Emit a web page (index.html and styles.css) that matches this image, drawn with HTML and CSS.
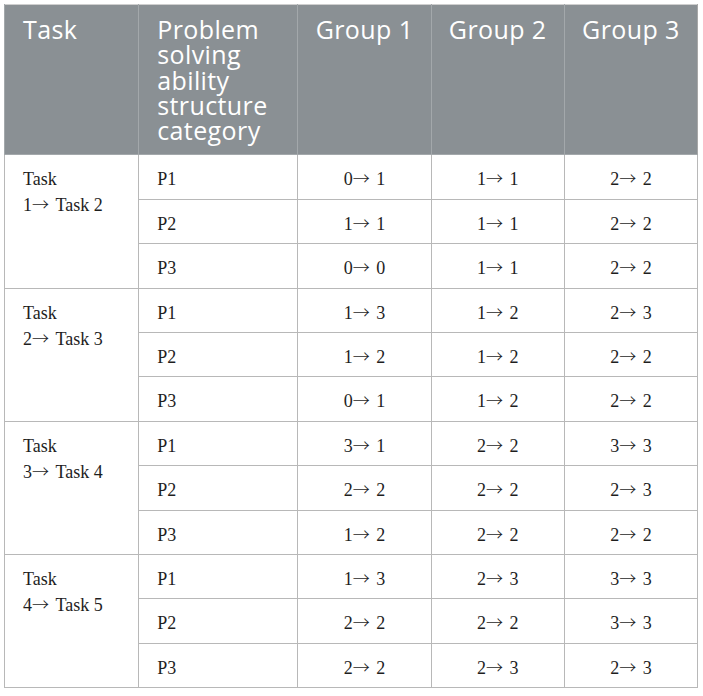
FILE: index.html
```html
<!DOCTYPE html>
<html>
<head>
<meta charset="utf-8">
<link rel="stylesheet" href="styles.css">
</head>
<body>
<div class="wrap">
<table class="data">
  <colgroup>
    <col class="c-task"><col class="c-cat"><col class="c-g"><col class="c-g"><col class="c-g">
  </colgroup>
  <thead>
    <tr>
      <th>Task</th>
      <th>Problem solving ability structure category</th>
      <th class="grp">Group 1</th>
      <th class="grp">Group 2</th>
      <th class="grp">Group 3</th>
    </tr>
  </thead>
  <tbody>
    <tr><td class="task" rowspan="3">Task 1<span class="arr">→</span>&nbsp;Task&nbsp;2</td><td>P1</td><td class="num">0<span class="arr">→</span> 1</td><td class="num">1<span class="arr">→</span> 1</td><td class="num">2<span class="arr">→</span> 2</td></tr>
    <tr><td>P2</td><td class="num">1<span class="arr">→</span> 1</td><td class="num">1<span class="arr">→</span> 1</td><td class="num">2<span class="arr">→</span> 2</td></tr>
    <tr><td>P3</td><td class="num">0<span class="arr">→</span> 0</td><td class="num">1<span class="arr">→</span> 1</td><td class="num">2<span class="arr">→</span> 2</td></tr>

    <tr><td class="task" rowspan="3">Task 2<span class="arr">→</span>&nbsp;Task&nbsp;3</td><td>P1</td><td class="num">1<span class="arr">→</span> 3</td><td class="num">1<span class="arr">→</span> 2</td><td class="num">2<span class="arr">→</span> 3</td></tr>
    <tr><td>P2</td><td class="num">1<span class="arr">→</span> 2</td><td class="num">1<span class="arr">→</span> 2</td><td class="num">2<span class="arr">→</span> 2</td></tr>
    <tr><td>P3</td><td class="num">0<span class="arr">→</span> 1</td><td class="num">1<span class="arr">→</span> 2</td><td class="num">2<span class="arr">→</span> 2</td></tr>

    <tr><td class="task" rowspan="3">Task 3<span class="arr">→</span>&nbsp;Task&nbsp;4</td><td>P1</td><td class="num">3<span class="arr">→</span> 1</td><td class="num">2<span class="arr">→</span> 2</td><td class="num">3<span class="arr">→</span> 3</td></tr>
    <tr><td>P2</td><td class="num">2<span class="arr">→</span> 2</td><td class="num">2<span class="arr">→</span> 2</td><td class="num">2<span class="arr">→</span> 3</td></tr>
    <tr><td>P3</td><td class="num">1<span class="arr">→</span> 2</td><td class="num">2<span class="arr">→</span> 2</td><td class="num">2<span class="arr">→</span> 2</td></tr>

    <tr><td class="task" rowspan="3">Task 4<span class="arr">→</span>&nbsp;Task&nbsp;5</td><td>P1</td><td class="num">1<span class="arr">→</span> 3</td><td class="num">2<span class="arr">→</span> 3</td><td class="num">3<span class="arr">→</span> 3</td></tr>
    <tr><td>P2</td><td class="num">2<span class="arr">→</span> 2</td><td class="num">2<span class="arr">→</span> 2</td><td class="num">3<span class="arr">→</span> 3</td></tr>
    <tr><td>P3</td><td class="num">2<span class="arr">→</span> 2</td><td class="num">2<span class="arr">→</span> 3</td><td class="num">2<span class="arr">→</span> 3</td></tr>
  </tbody>
</table>
</div>
</body>
</html>
```

FILE: styles.css
```css
html, body {
  margin: 0;
  padding: 0;
  background: #ffffff;
}

.wrap {
  padding: 4px 5px 4px 4px;
}

.data {
  width: 694px;
  border-collapse: collapse;
  table-layout: fixed;
  border: 1px solid #a8a8a8;
  border-top: 1px solid #cfcfcf;
}

.c-task { width: 134px; }
.c-cat { width: 159px; }
.c-g { width: 133px; }

.data th {
  background: #8a9094;
  color: #ffffff;
  font-family: "Open Sans", sans-serif;
  font-weight: 400;
  font-size: 25px;
  letter-spacing: 0.4px;
  line-height: 25.3px;
  text-align: left;
  vertical-align: top;
  padding: 12px 8px 11px 18px;
  border-left: 1px solid #a3a8ab;
  border-bottom: 1px solid #a3a8ab;
}

.data th.grp {
  text-align: center;
  padding-left: 4px;
  padding-right: 4px;
}

.data td {
  font-family: "Liberation Serif", "Times New Roman", serif;
  font-size: 18px;
  line-height: 26px;
  color: #1e1e1e;
  padding: 11px 10px 6.4px 18px;
  border: 1px solid #b8b8b8;
  vertical-align: top;
  text-align: left;
}

.data td.num {
  text-align: center;
  padding-left: 6px;
  padding-right: 6px;
}

.data td.task {
  padding-right: 8px;
}

.arr {
  font-family: "Noto Sans CJK JP", "DejaVu Serif", serif;
  font-size: 17px;
  line-height: 1;
  font-weight: 300;
  margin-right: 2px;
}
```
